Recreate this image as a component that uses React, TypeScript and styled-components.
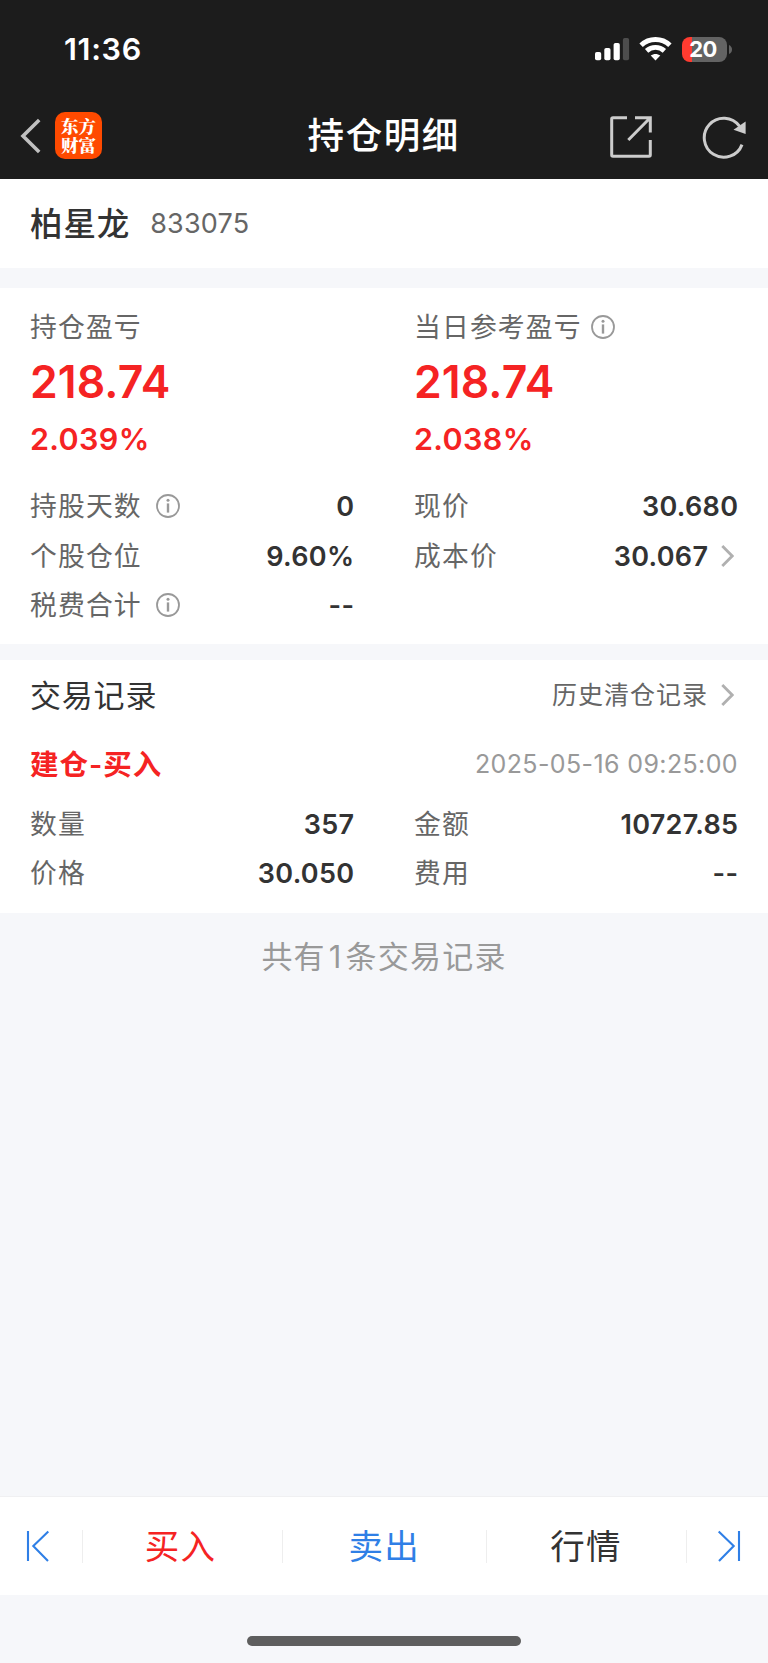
import React from 'react';
import styled, { createGlobalStyle } from 'styled-components';

const GlobalStyle = createGlobalStyle`
  * { box-sizing: border-box; }
  html, body { margin: 0; padding: 0; background: #f6f7fa; }
  body {
    font-family: Inter, "Noto Sans CJK SC", sans-serif;
    -webkit-font-smoothing: antialiased;
  }
`;

const Page = styled.div`
  width: 768px;
  height: 1663px;
  display: flex;
  flex-direction: column;
  background: #f6f7fa;
  color: #333;
  overflow: hidden;
`;

const Header = styled.header`
  height: 179.4px;
  flex: none;
  background: #1c1c1c;
  color: #fff;
`;

const StatusBar = styled.div`
  height: 93px;
  padding: 5px 36.5px 0 64px;
  display: flex;
  align-items: center;
  justify-content: space-between;
`;

const Clock = styled.span`
  font-size: 30.5px;
  font-weight: 600;
  line-height: 36px;
  letter-spacing: 0.7px;
`;

const StatusIcons = styled.div`
  display: flex;
  align-items: center;
`;

const Battery = styled.div`
  width: 45px;
  height: 25px;
  margin-left: 10px;
  padding-right: 2px;
  border-radius: 8px;
  background: linear-gradient(90deg, #ff3b30 10px, #636363 10px);
  font-size: 22px;
  font-weight: 700;
  line-height: 25px;
  text-align: center;
  letter-spacing: -0.6px;
`;

const NavBar = styled.div`
  height: 86px;
  padding: 0 22.5px 0 20px;
  display: grid;
  grid-template-columns: 1fr auto 1fr;
  align-items: center;
`;

const NavSide = styled.div<{ $end?: boolean }>`
  display: flex;
  align-items: center;
  justify-content: ${p => (p.$end ? 'flex-end' : 'flex-start')};
  gap: ${p => (p.$end ? '49.5px' : '14px')};
  padding-top: ${p => (p.$end ? '2px' : '0')};
`;

const Title = styled.h1`
  margin: 0;
  padding: 0 0 1px 2px;
  font-size: 36.5px;
  font-weight: 500;
  line-height: 44px;
  letter-spacing: 1.6px;
`;

const Logo = styled.div`
  width: 47px;
  height: 47px;
  margin-bottom: 1.5px;
  border-radius: 10px;
  background: #ff4a00;
  display: flex;
  flex-direction: column;
  align-items: center;
  justify-content: center;
  font-family: "Noto Serif CJK SC", "Noto Sans CJK SC", sans-serif;
  font-size: 17.5px;
  font-weight: 900;
  line-height: 19.5px;
`;

const Panel = styled.section<{ $height: number; $gap?: number }>`
  height: ${p => p.$height}px;
  margin-bottom: ${p => p.$gap ?? 0}px;
  padding: 0 30px;
  flex: none;
  background: #fff;
`;

const StockLine = styled.div`
  height: 88px;
  display: flex;
  align-items: center;
  gap: 20px;
`;

const StockName = styled.span`
  margin-bottom: 4px;
  font-size: 32.5px;
  font-weight: 500;
  letter-spacing: 0.9px;
`;

const StockCode = styled.span`
  color: #666;
  font-size: 27px;
  letter-spacing: 0.2px;
`;

const Columns = styled.div`
  display: grid;
  grid-template-columns: 324.3px 324.3px;
  column-gap: 59.7px;
`;

const Label = styled.span`
  display: flex;
  align-items: center;
  color: #666;
  font-size: 26.8px;
  line-height: 40px;
  letter-spacing: 1.15px;
`;

const Summary = styled.div`
  padding-top: 19px;
`;

const Profit = styled.div`
  color: #f52323;
  font-size: 44.5px;
  font-weight: 600;
  line-height: 60px;
  margin-top: 5px;
  letter-spacing: 0.1px;
`;

const Percent = styled.div`
  color: #f52323;
  font-size: 30.5px;
  font-weight: 600;
  line-height: 40px;
  margin-top: 7px;
  letter-spacing: 0.35px;
`;

const Details = styled(Columns)<{ $top: number }>`
  margin-top: ${p => p.$top}px;
  grid-auto-rows: 49.2px;
`;

const Detail = styled.div`
  display: flex;
  align-items: center;
  justify-content: space-between;
`;

const Value = styled.span`
  display: flex;
  align-items: center;
  padding-top: 1px;
  font-size: 27px;
  font-weight: 600;
  letter-spacing: 0.3px;
`;

const SectionHead = styled.div`
  height: 72px;
  display: flex;
  align-items: center;
  justify-content: space-between;
`;

const SectionTitle = styled.h2`
  margin: 0 0 4px;
  font-size: 31px;
  font-weight: 400;
  letter-spacing: 0.8px;
`;

const HistoryLink = styled.a`
  display: flex;
  align-items: center;
  color: #666;
  font-size: 25px;
  line-height: 36px;
  letter-spacing: 1px;
  margin-bottom: 1px;
`;

const TradeHead = styled.div`
  height: 64px;
  display: flex;
  align-items: center;
  justify-content: space-between;
`;

const TradeType = styled.span`
  margin-bottom: 2px;
  color: #f52323;
  font-size: 28.5px;
  font-weight: 600;
  letter-spacing: 1px;
`;

const TradeTime = styled.time`
  padding-top: 1px;
  color: #999;
  font-size: 25px;
  letter-spacing: 0.38px;
`;

const Total = styled.p`
  margin: 0;
  padding-top: 22px;
  flex: 1;
  color: #999;
  font-size: 31px;
  line-height: 44px;
  letter-spacing: 1.2px;
  text-align: center;
`;

const Count = styled.span`
  margin: 0 3px;
`;

const Tabs = styled.nav`
  height: 99px;
  flex: none;
  display: grid;
  grid-template-columns: 83px 200px 203.5px 200px 81.5px;
  align-items: center;
  border-top: 1px solid #f0f0f2;
  background: #fff;
`;

const Tab = styled.div<{ $color?: string; $last?: boolean }>`
  height: 33px;
  display: flex;
  align-items: center;
  justify-content: center;
  border-right: ${p => (p.$last ? 'none' : '1px solid #eee')};
  color: ${p => p.$color ?? '#333'};
  font-size: 34.5px;
  letter-spacing: 1.2px;
`;

const TabText = styled.span<{ $trailing?: number }>`
  margin-bottom: 4px;
  margin-right: ${p => p.$trailing ?? 0}px;
`;

const HomeArea = styled.div`
  height: 68px;
  flex: none;
  display: flex;
  justify-content: center;
  padding-top: 41px;
`;

const HomeIndicator = styled.div`
  width: 274px;
  height: 10px;
  border-radius: 5px;
  background: #5e5e5e;
`;

const InfoSvg = styled.svg<{ $left: number }>`
  margin-left: ${p => p.$left}px;
`;

const ArrowSvg = styled.svg`
  margin: 0 4px 0 13px;
`;

const Info = ({ left }: { left: number }) => (
  <InfoSvg $left={left} width="24" height="24" viewBox="0 0 24 24" fill="none" stroke="#999" strokeWidth="1.8">
    <circle cx="12" cy="12" r="11" />
    <path d="M12 9.4V18.6" strokeWidth="2.4" />
    <circle cx="12" cy="6.2" r="1.5" fill="#999" stroke="none" />
  </InfoSvg>
);

const Chevron = () => (
  <ArrowSvg width="13" height="22" viewBox="0 0 13 22" fill="none" stroke="#b0b0b0" strokeWidth="2.8">
    <path d="M1.3 1L11.2 11L1.3 21" />
  </ArrowSvg>
);

const Signal = () => (
  <svg width="35" height="24" viewBox="0 0 35 24" fill="#fff">
    <rect x="0" y="15" width="6.2" height="8.2" rx="1.8" />
    <rect x="9.3" y="11" width="6.2" height="12.2" rx="1.8" />
    <rect x="18.6" y="6" width="6.2" height="17.2" rx="1.8" />
    <rect x="27.9" y="1" width="6.2" height="22.2" rx="1.8" fill="#4d4d4d" />
  </svg>
);

const WifiSvg = styled.svg`
  margin-left: 9px;
`;

const Wifi = () => (
  <WifiSvg width="33" height="24" viewBox="0 0 33 24" fill="none" stroke="#fff" strokeWidth="4.9">
    <path d="M2.1 8.3C10.2 .6 22.8 .6 30.9 8.3" />
    <path d="M7.6 13.9C12.7 9.2 20.3 9.2 25.4 13.9" />
    <path d="M11.7 18.6C14.5 16.3 18.5 16.3 21.3 18.6L16.5 23.4Z" fill="#fff" stroke="none" />
  </WifiSvg>
);

const NubSvg = styled.svg`
  margin-left: 2px;
`;

const BackIcon = () => (
  <svg width="21" height="36" viewBox="0 0 21 36" fill="none" stroke="#c0c0c0" strokeWidth="3.6">
    <path d="M19.2 2L3 18L19.2 34" />
  </svg>
);

const ShareIcon = () => (
  <svg width="42" height="42" viewBox="0 0 42 42" fill="none" stroke="#ccc" strokeWidth="3">
    <path d="M17 1.7H3Q1.7 1.7 1.7 3V39Q1.7 40.3 3 40.3H39Q40.3 40.3 40.3 39V24" />
    <path d="M25 1.7H40.3V16.5M40 2L18.3 24" />
  </svg>
);

const RefreshIcon = () => (
  <svg width="44" height="44" viewBox="0 0 44 44" fill="none" stroke="#ccc" strokeWidth="3">
    <path d="M40 29.6A19.5 19.5 0 1 1 37.5 11.2" />
    <path d="M43.6 6.4V19L31.5 14.8Z" fill="#ccc" stroke="none" />
  </svg>
);

const FirstSvg = styled.svg`
  margin-right: 6px;
`;

const LastSvg = styled.svg`
  margin-left: 3px;
`;

const FirstIcon = () => (
  <FirstSvg width="24" height="32" viewBox="0 0 24 32" fill="none" stroke="#2f7fe6" strokeWidth="2.1">
    <path d="M2 1V31M22.3 1.5L7.3 16L22 31" />
  </FirstSvg>
);

const LastIcon = () => (
  <LastSvg width="24" height="32" viewBox="0 0 24 32" fill="none" stroke="#2f7fe6" strokeWidth="2.1">
    <path d="M22 1V31M1.7 1.5L16.7 16L2 31" />
  </LastSvg>
);

export default function App() {
  return (
    <>
      <GlobalStyle />
      <Page>
        <Header>
          <StatusBar>
            <Clock>11:36</Clock>
            <StatusIcons>
              <Signal />
              <Wifi />
              <Battery>20</Battery>
              <NubSvg width="3" height="9" viewBox="0 0 3 9" fill="#636363">
                <path d="M0 0Q3 1.5 3 4.5T0 9Z" />
              </NubSvg>
            </StatusIcons>
          </StatusBar>
          <NavBar>
            <NavSide>
              <BackIcon />
              <Logo>
                <span>东方</span>
                <span>财富</span>
              </Logo>
            </NavSide>
            <Title>持仓明细</Title>
            <NavSide $end>
              <ShareIcon />
              <RefreshIcon />
            </NavSide>
          </NavBar>
        </Header>

        <Panel $height={88.6} $gap={19.8}>
          <StockLine>
            <StockName>柏星龙</StockName>
            <StockCode>833075</StockCode>
          </StockLine>
        </Panel>

        <Panel $height={356.2} $gap={16}>
          <Columns>
            <Summary>
              <Label>持仓盈亏</Label>
              <Profit>218.74</Profit>
              <Percent>2.039%</Percent>
            </Summary>
            <Summary>
              <Label>当日参考盈亏<Info left={9} /></Label>
              <Profit>218.74</Profit>
              <Percent>2.038%</Percent>
            </Summary>
          </Columns>
          <Details $top={23}>
            <Detail><Label>持股天数<Info left={14} /></Label><Value>0</Value></Detail>
            <Detail><Label>现价</Label><Value>30.680</Value></Detail>
            <Detail><Label>个股仓位</Label><Value>9.60%</Value></Detail>
            <Detail><Label>成本价</Label><Value>30.067<Chevron /></Value></Detail>
            <Detail><Label>税费合计<Info left={14} /></Label><Value>--</Value></Detail>
          </Details>
        </Panel>

        <Panel $height={253.5}>
          <SectionHead>
            <SectionTitle>交易记录</SectionTitle>
            <HistoryLink>历史清仓记录<Chevron /></HistoryLink>
          </SectionHead>
          <TradeHead>
            <TradeType>建仓-买入</TradeType>
            <TradeTime>2025-05-16 09:25:00</TradeTime>
          </TradeHead>
          <Details $top={3}>
            <Detail><Label>数量</Label><Value>357</Value></Detail>
            <Detail><Label>金额</Label><Value>10727.85</Value></Detail>
            <Detail><Label>价格</Label><Value>30.050</Value></Detail>
            <Detail><Label>费用</Label><Value>--</Value></Detail>
          </Details>
        </Panel>

        <Total>共有<Count>1</Count>条交易记录</Total>

        <Tabs>
          <Tab><FirstIcon /></Tab>
          <Tab $color="#f52323"><TabText $trailing={4}>买入</TabText></Tab>
          <Tab $color="#2f7fe6"><TabText>卖出</TabText></Tab>
          <Tab><TabText>行情</TabText></Tab>
          <Tab $last><LastIcon /></Tab>
        </Tabs>
        <HomeArea>
          <HomeIndicator />
        </HomeArea>
      </Page>
    </>
  );
}
